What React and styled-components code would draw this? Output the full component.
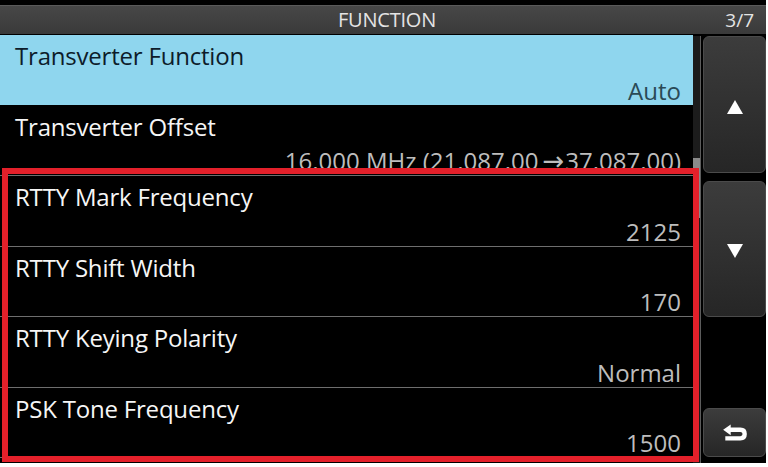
import styled, { createGlobalStyle } from 'styled-components';

const GlobalStyle = createGlobalStyle`
  html, body {
    margin: 0;
    padding: 0;
    background: #ffffff;
  }
  body {
    font-family: 'Open Sans', 'Noto Sans', sans-serif;
  }
`;

const Arrow = styled.span`
  font-family: 'DejaVu Sans', sans-serif;
  font-size: 26px;
  line-height: 0;
  margin: 0 1px 0 4px;
`;

const items = [
  { title: 'Transverter Function', value: 'Auto', selected: true },
  {
    title: 'Transverter Offset',
    value: (
      <>
        16.000 MHz (21.087.00<Arrow>{'\u2192'}</Arrow>37.087.00)
      </>
    ),
  },
  { title: 'RTTY Mark Frequency', value: '2125' },
  { title: 'RTTY Shift Width', value: '170' },
  { title: 'RTTY Keying Polarity', value: 'Normal' },
  { title: 'PSK Tone Frequency', value: '1500' },
];

const App = () => {
  return (
    <>
      <GlobalStyle />
      <Screen>
        <Header>
          <span />
          <HeaderTitle>FUNCTION</HeaderTitle>
          <PageNum>3/7</PageNum>
        </Header>
        <Body>
          <List>
            {items.map((item) => (
              <Row key={item.title} $selected={item.selected}>
                <RowTitle $selected={item.selected}>{item.title}</RowTitle>
                <RowValue $selected={item.selected}>{item.value}</RowValue>
              </Row>
            ))}
          </List>
          <ScrollTrack>
            <ScrollThumb />
          </ScrollTrack>
          <Side>
            <SideButton $height={137}>
              <UpIcon />
            </SideButton>
            <SideButton $height={136}>
              <DownIcon />
            </SideButton>
            <Spacer />
            <SideButton $height={49}>
              <ReturnIcon />
            </SideButton>
          </Side>
        </Body>
        <Highlight />
      </Screen>
    </>
  );
};

export default App;

const Screen = styled.div`
  position: relative;
  width: 766px;
  height: 463px;
  background: #000;
  display: flex;
  flex-direction: column;
  padding-top: 5px;
  box-sizing: border-box;
  overflow: hidden;
`;

const Header = styled.div`
  height: 29px;
  flex-shrink: 0;
  background: linear-gradient(#474747, #3a3a3a);
  border-top: 1px solid #5a5a5a;
  box-sizing: border-box;
  display: grid;
  grid-template-columns: 1fr auto 1fr;
  align-items: center;
  color: #e4e4e4;
  font-size: 20px;
  line-height: 1;
`;

const HeaderTitle = styled.span`
  letter-spacing: -0.2px;
  transform: translateX(4px);
`;

const PageNum = styled.span`
  justify-self: end;
  padding-right: 12px;
  font-size: 19px;
`;

const Body = styled.div`
  flex: 1;
  display: flex;
  padding-top: 1px;
  min-height: 0;
`;

const List = styled.div`
  width: 693px;
  display: flex;
  flex-direction: column;
`;

const Row = styled.div`
  height: 70.5px;
  flex-shrink: 0;
  box-sizing: border-box;
  display: flex;
  flex-direction: column;
  justify-content: space-between;
  padding: 9px 12px 2px 15px;
  background: ${(p) => (p.$selected ? '#8fd6ee' : '#000')};
  border-bottom: 1px solid ${(p) => (p.$selected ? '#000' : '#6e6e6e')};
  line-height: 1;
  font-size: 24px;
`;

const RowTitle = styled.div`
  color: ${(p) => (p.$selected ? '#0d1c2a' : '#f6f6f6')};
  letter-spacing: -0.2px;
`;

const RowValue = styled.div`
  text-align: right;
  color: ${(p) => (p.$selected ? '#2a4a56' : '#bdbdbd')};
`;

const ScrollTrack = styled.div`
  width: 7px;
  margin-top: 1px;
  background: #1c1c1c;
  border-right: 1px solid #5c5c5c;
  display: flex;
  flex-direction: column;
  padding-top: 122px;
`;

const ScrollThumb = styled.div`
  height: 60px;
  background: #8a8a8a;
`;

const Side = styled.div`
  flex: 1;
  display: flex;
  flex-direction: column;
  gap: 8px;
  padding: 1px 0 6px 2px;
`;

const Spacer = styled.div`
  flex: 1;
`;

const SideButton = styled.button`
  height: ${(p) => p.$height}px;
  flex-shrink: 0;
  border: 1px solid #4b4b4b;
  border-radius: 6px;
  background: linear-gradient(#3c3c3c, #262626);
  display: flex;
  align-items: center;
  justify-content: center;
  padding: 0;
  color: #fff;
`;

const Highlight = styled.div`
  position: absolute;
  left: 2px;
  top: 168px;
  width: 697px;
  height: 294px;
  border: 6px solid #e3202a;
  box-sizing: border-box;
  pointer-events: none;
`;

const UpIcon = () => (
  <svg width='16' height='14' viewBox='0 0 16 14' style={{ marginTop: 4 }}>
    <polygon points='8,0 16,14 0,14' fill='currentColor' />
  </svg>
);

const DownIcon = () => (
  <svg width='16' height='14' viewBox='0 0 16 14' style={{ marginTop: 4 }}>
    <polygon points='0,0 16,0 8,14' fill='currentColor' />
  </svg>
);

const ReturnIcon = () => (
  <svg width='28' height='20' viewBox='0 0 26 18'>
    <path
      d='M9 1 L2 6 L9 11 L9 8 L18 8 Q20 8 20 10 Q20 12 18 12 L4 12 L4 16 L18 16 Q24 16 24 10 Q24 4 18 4 L9 4 Z'
      fill='currentColor'
    />
  </svg>
);
